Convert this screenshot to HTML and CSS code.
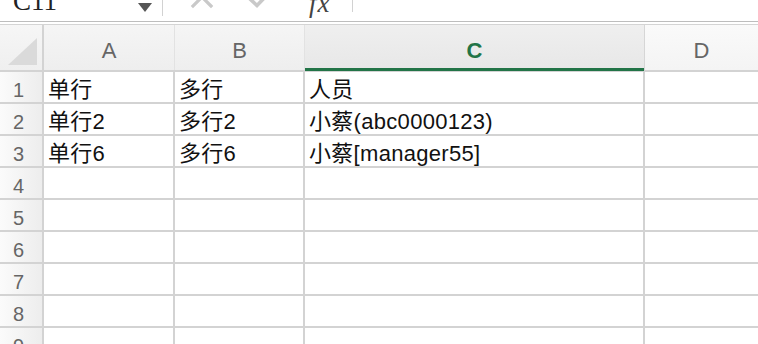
FILE: index.html
```html
<!DOCTYPE html>
<html lang="zh">
<head>
<meta charset="utf-8">
<link rel="stylesheet" href="styles.css">
</head>
<body>
<div class="topbar">
  <div class="namebox">
    <span class="name">C11</span>
    <span class="dropdown"></span>
  </div>
  <div class="sep"></div>
  <div class="formula-tools">
    <svg class="tool-icons" width="120" height="21" viewBox="0 0 120 21">
      <path d="M30 -12 L48 6 M48 -12 L30 6" stroke="#c9c9c9" stroke-width="3.2" fill="none" stroke-linecap="square"/>
      <path d="M86 -2 L94 5.5 L106 -7" stroke="#c9c9c9" stroke-width="3.6" fill="none"/>
    </svg>
    <span class="fx">fx</span>
  </div>
  <div class="sep short"></div>
</div>
<div class="sheet">
  <div class="corner">
    <svg width="42" height="45" viewBox="0 0 42 45"><polygon points="8,40 37,40 37,13" fill="#dadada"/></svg>
  </div>
  <div class="colhead">A</div>
  <div class="colhead">B</div>
  <div class="colhead selected">C</div>
  <div class="colhead light">D</div>

  <div class="rowhead">1</div>
  <div class="cell">单行</div>
  <div class="cell">多行</div>
  <div class="cell">人员</div>
  <div class="cell"></div>

  <div class="rowhead">2</div>
  <div class="cell">单行2</div>
  <div class="cell">多行2</div>
  <div class="cell">小蔡(abc0000123)</div>
  <div class="cell"></div>

  <div class="rowhead">3</div>
  <div class="cell">单行6</div>
  <div class="cell">多行6</div>
  <div class="cell">小蔡[manager55]</div>
  <div class="cell"></div>

  <div class="rowhead">4</div>
  <div class="cell"></div><div class="cell"></div><div class="cell"></div><div class="cell"></div>
  <div class="rowhead">5</div>
  <div class="cell"></div><div class="cell"></div><div class="cell"></div><div class="cell"></div>
  <div class="rowhead">6</div>
  <div class="cell"></div><div class="cell"></div><div class="cell"></div><div class="cell"></div>
  <div class="rowhead">7</div>
  <div class="cell"></div><div class="cell"></div><div class="cell"></div><div class="cell"></div>
  <div class="rowhead">8</div>
  <div class="cell"></div><div class="cell"></div><div class="cell"></div><div class="cell"></div>
  <div class="rowhead">9</div>
  <div class="cell"></div><div class="cell"></div><div class="cell"></div><div class="cell"></div>
</div>
</body>
</html>
```

FILE: styles.css
```css
html, body {
  margin: 0;
  padding: 0;
  background: #ffffff;
  overflow: hidden;
  width: 758px;
  height: 344px;
  font-family: "Liberation Sans", "Noto Sans CJK SC", sans-serif;
}

.topbar {
  display: flex;
  height: 21px;
  border-bottom: 1px solid #bdbdbd;
  background: #ffffff;
  overflow: hidden;
}

.namebox {
  width: 162px;
  display: flex;
  align-items: flex-start;
}

.name {
  margin-top: -12px;
  margin-left: 13px;
  font-size: 27px;
  line-height: 27px;
  color: #222;
  font-family: "Liberation Serif", serif;
}

.dropdown {
  margin-left: auto;
  margin-right: 10px;
  margin-top: 3px;
  width: 0;
  height: 0;
  border-left: 7px solid transparent;
  border-right: 7px solid transparent;
  border-top: 9px solid #555555;
}

.sep {
  width: 1px;
  height: 16px;
  background: #d2d2d2;
}

.sep.short {
  height: 12px;
}

.formula-tools {
  width: 189px;
  display: flex;
  align-items: flex-start;
}

.tool-icons {
  display: block;
  flex: none;
}

.fx {
  margin-left: 26px;
  margin-top: -10px;
  font-family: "Liberation Serif", serif;
  font-style: italic;
  font-size: 27px;
  line-height: 27px;
  color: #444;
  letter-spacing: 1px;
}

.sheet {
  margin-top: 2px;
  border-top: 1px solid #d4d4d4;
  display: grid;
  grid-template-columns: 42px 129px 128px 338px 1fr;
  grid-template-rows: 45px repeat(9, 30px);
  gap: 2px;
  background: #d3d3d3;
}

.corner {
  background: linear-gradient(#f6f6f6, #efefef);
}

.corner svg {
  display: block;
}

.colhead {
  background: linear-gradient(#f5f5f5, #eeeeee);
  text-align: center;
  font-size: 22px;
  line-height: 22px;
  padding-top: 15px;
  box-sizing: border-box;
  color: #666666;
  margin-right: -2px;
  border-right: 1px solid #e2e2e2;
}

.colhead.selected {
  background: linear-gradient(#efefef, #e7e7e7);
  color: #227447;
  font-weight: bold;
  box-shadow: inset 0 -3px 0 #227447;
  margin-bottom: -1px;
  border-right: 1px solid #d6d6d6;
}

.colhead.light {
  background: linear-gradient(#fafafa, #f4f4f4);
  margin-right: 0;
  border-right: none;
}

.rowhead {
  background: linear-gradient(to right, #fbfbfb, #ededed);
  font-size: 20px;
  line-height: 20px;
  padding-top: 8px;
  padding-right: 5px;
  box-sizing: border-box;
  text-align: center;
  color: #666666;
}

.cell {
  background: #ffffff;
  font-size: 22px;
  line-height: 22px;
  padding: 7px 0 0 4px;
  box-sizing: border-box;
  color: #111111;
  white-space: nowrap;
  letter-spacing: 0.3px;
}
```
